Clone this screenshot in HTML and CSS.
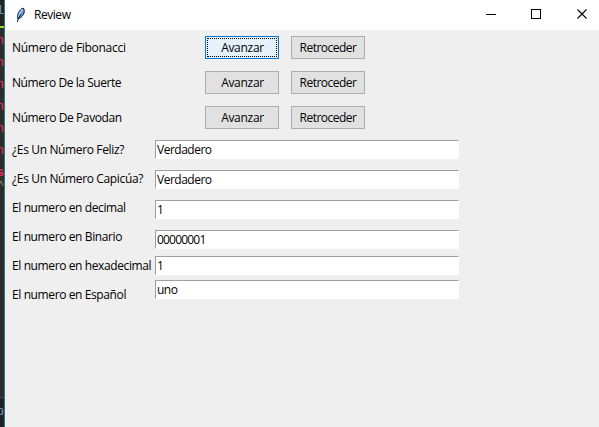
FILE: index.html
```html
<!DOCTYPE html>
<html lang="es">
<head>
<meta charset="utf-8">
<title>Review</title>
<link rel="stylesheet" href="styles.css">
</head>
<body>
<div class="desktop">
  <div class="editor">
    <div class="editor-tab"><span>l</span></div>
    <div class="code"><span>n</span><span>n</span><span>n</span><span>n</span><span>n</span><span>n</span><span class="string">s</span><span class="squiggle">^</span></div>
    <div class="status"><span>p</span></div>
  </div>
  <main class="window">
    <header class="titlebar">
      <svg class="feather" width="12" height="16" viewBox="0 0 12 16">
        <path d="M3 12C1.500 8 4 3 8 1l1 1c1 4-1 7-4 9z" fill="#5b96dc" stroke="#172033" stroke-width="1"/>
        <path d="M7.500 2.500C5 5 4 7 3.700 10" fill="none" stroke="#b8d8fa" stroke-width="1.200"/>
        <path d="M6 7L3 12l-.500 3" fill="none" stroke="#17202e" stroke-width="1"/>
      </svg>
      <h1>Review</h1>
      <svg class="controls" width="102" height="11" viewBox="0 0 102 11" fill="none" stroke="#000" stroke-width="1">
        <path d="M0 5.500h10M45.500 .500h9v9h-9z" shape-rendering="crispEdges"/>
        <path d="M91.500 .500l9 9M100.500 .500l-9 9" stroke-width="1.100"/>
      </svg>
    </header>
    <section class="actions">
      <div class="action"><span class="name fibonacci">Número de Fibonacci</span><button class="active">Avanzar</button><button class="back">Retroceder</button></div>
      <div class="action"><span class="name suerte">Número De la Suerte</span><button>Avanzar</button><button class="back">Retroceder</button></div>
      <div class="action"><span class="name pavodan">Número De Pavodan</span><button>Avanzar</button><button class="back">Retroceder</button></div>
    </section>
    <section class="results">
      <div class="labels">
        <span class="feliz">¿Es Un Número Feliz?</span>
        <span class="feliz">¿Es Un Número Capicúa?</span>
        <span>El numero en decimal</span>
        <span>El numero en Binario</span>
        <span>El numero en hexadecimal</span>
        <span>El numero en Español</span>
      </div>
      <div class="entries">
        <div class="entry">Verdadero</div>
        <div class="entry">Verdadero</div>
        <div class="entry">1</div>
        <div class="entry binary">00000001</div>
        <div class="entry hex">1</div>
        <div class="entry">uno</div>
      </div>
    </section>
  </main>
</div>
</body>
</html>
```
FILE: styles.css
```css
* { box-sizing: border-box; }
body { margin: 0; overflow: hidden; }
.desktop { display: flex; width: 599px; height: 427px; font: 12px/16px "Open Sans", "Noto Sans", sans-serif; color: #000; }
.editor { width: 4px; flex: none; overflow: hidden; background: #2d2d2d; display: flex; flex-direction: column; font: 13px/22px "Liberation Mono", monospace; color: #f92660; }
.editor span { display: flex; justify-content: flex-end; width: 4px; }
.editor-tab { height: 28px; border-bottom: 2px solid #86e51d; background: #242424; color: #6ba5b5; flex: none; }
.code { height: 369px; padding-top: 2px; background: #2d2d2d; flex: none; }
.code .string { font-weight: bold; height: 12px; }
.code .squiggle { color: #9c9a70; font-size: 11px; }
.status { height: 30px; padding-top: 3px; background: #202124; border-top: 1px solid #494949; color: #7e9bbd; }
.window { flex: 1; border-left: 1px solid #247b94; background: #efefef; }
.titlebar { height: 30px; background: #fff; display: flex; align-items: center; padding: 0 11px 0 10px; }
.feather { margin-top: -1px; }
h1 { margin: 0 auto 0 7px; font-size: 12px; font-weight: 400; letter-spacing: -.45px; }
.controls { margin-top: -1px; }
.actions { padding: 6px 0 0 7px; }
.action { height: 23px; margin-bottom: 12px; display: flex; gap: 12px; align-items: center; }
.name { width: 181px; white-space: nowrap; }
.fibonacci { letter-spacing: -.28px; }
.suerte { letter-spacing: -.44px; }
.pavodan { letter-spacing: -.4px; }
button { width: 74px; height: 23px; padding: 0 0 0 1px; border: 1px solid #adadad; background: #e1e1e1; color: #000; font: inherit; letter-spacing: -.3px; }
.back { padding: 0; letter-spacing: -.5px; }
.active { border-color: #0078d7; background: #e5f1fb; outline: 1px dotted #000; outline-offset: -3px; }
.results { display: flex; margin-top: -1px; padding-left: 7px; }
.labels { width: 143px; display: flex; flex-direction: column; gap: 13px; white-space: nowrap; letter-spacing: -.39px; padding-top: 2px; }
.feliz { letter-spacing: -.36px; }
.entries { width: 304px; display: flex; flex-direction: column; gap: 11px; }
.entry { height: 19px; padding: 1px 1px; background: #fff; border: 1px solid #fff; border-top-color: #a0a0a0; border-left-color: #a0a0a0; line-height: 16px; letter-spacing: -.5px; }
.binary { margin-bottom: -4px; letter-spacing: -.8px; }
.hex { margin-bottom: -6px; }
```
